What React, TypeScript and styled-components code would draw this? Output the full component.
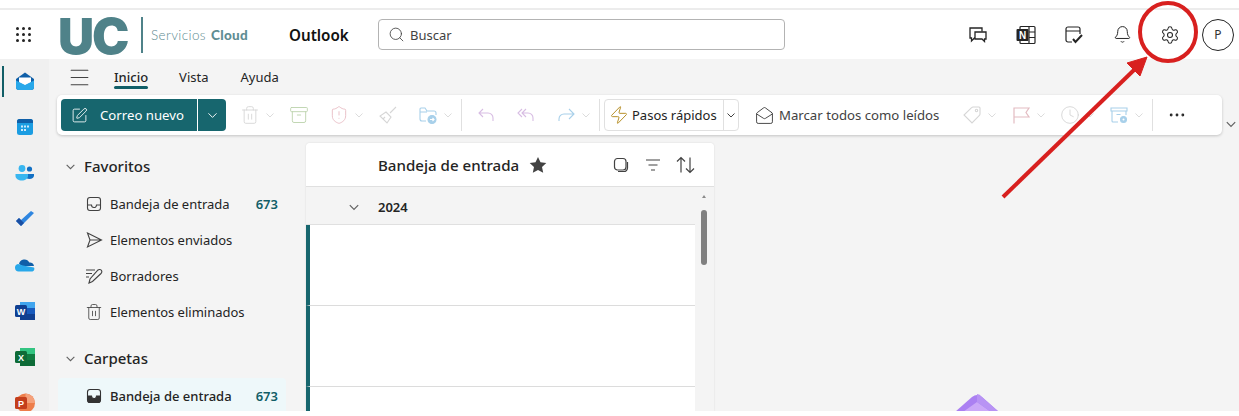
import React from "react";
import styled, { createGlobalStyle } from "styled-components";
import {
  Search, SquarePen, ChevronDown, Trash2, Archive, ShieldAlert, MailOpen, Clock,
  Bell, Settings, Ellipsis, Zap, Menu,
} from "lucide-react";

const Global = createGlobalStyle`
  html, body { margin: 0; padding: 0; background: #fff; }
  body { font-family: "Noto Sans", "Open Sans", sans-serif; color: #242424; }
  * { box-sizing: border-box; }
`;

const Page = styled.div`
  position: relative;
  width: 1239px;
  height: 416px;
  overflow: hidden;
  background: #fff;
  padding-top: 8px;
`;
const TopLine = styled.div`
  height: 2px;
  background: #ececec;
`;
const Header = styled.header`
  height: 49px;
  display: flex;
  align-items: center;
  background: #fff;
  border-top-left-radius: 8px;
  & > * { flex: none; }
`;
const Waffle = styled.div`
  width: 16px;
  height: 16px;
  margin-left: 16px;
  display: grid;
  grid-template-columns: repeat(3, 3px);
  grid-template-rows: repeat(3, 3px);
  gap: 3px;
  & > i { background: #242424; border-radius: 50%; }
`;
const Logo = styled.div`
  display: flex;
  align-items: center;
  margin-left: 26px;
  width: 231px;
`;
const LogoMark = styled.span`
  font-family: "Inter", sans-serif;
  font-weight: 900;
  font-size: 50px;
  line-height: 36px;
  letter-spacing: -2px;
  color: #4f8289;
  width: 83px;
  padding-top: 2px;
`;
const LogoDivider = styled.span`
  width: 2px;
  height: 36px;
  background: #4f8289;
  margin-right: 8px;
`;
const LogoText = styled.span`
  font-family: "Lato", sans-serif;
  font-size: 13.5px;
  font-weight: 300;
  letter-spacing: 0.4px;
  color: #5c8a90;
  white-space: nowrap;
  & > b { font-weight: 900; margin-left: 5px; color: #5f8d93; letter-spacing: 0.3px; }
`;
const AppName = styled.span`
  font-size: 15.2px;
  font-weight: 600;
  color: #111;
  width: 89px;
`;
const SearchBox = styled.div`
  width: 407px;
  height: 31px;
  border: 1px solid #b3b3b3;
  border-radius: 4px;
  display: flex;
  align-items: center;
  padding-left: 9px;
  gap: 5px;
  font-size: 13px;
  color: #424242;
`;
const HeaderIcons = styled.div`
  display: flex;
  align-items: center;
  margin-left: 169px;
`;
const HeaderIcon = styled.div`
  width: 48px;
  display: flex;
  justify-content: center;
  color: #242424;
`;
const Avatar = styled.div`
  width: 32px;
  height: 32px;
  margin-left: 8px;
  border: 1px solid #242424;
  border-radius: 50%;
  display: flex;
  align-items: center;
  justify-content: center;
  font-size: 12px;
  color: #333;
`;
const Main = styled.div`
  height: 352px;
  display: flex;
  overflow: hidden;
  background: #f4f4f4;
`;
const Rail = styled.nav`
  width: 49px;
  flex: none;
  background: #f0f0f0;
  display: flex;
  flex-direction: column;
  align-items: center;
  padding-top: 12px;
  position: relative;
  gap: 26px;
  & > svg { flex: none; }
`;
const RailMark = styled.span`
  position: absolute;
  left: 2px;
  top: 7px;
  width: 2px;
  height: 31px;
  background: #115e67;
`;
const Content = styled.div`
  flex: 1;
  min-width: 0;
  display: flex;
  flex-direction: column;
`;
const TabBar = styled.div`
  height: 36px;
  display: flex;
  align-items: center;
  padding-left: 18px;
  color: #424242;
`;
const Tab = styled.div<{ $active?: boolean; $gap: number }>`
  position: relative;
  margin-left: ${(p) => p.$gap}px;
  font-size: 13px;
  font-weight: ${(p) => (p.$active ? 500 : 400)};
  color: #242424;
  &::after {
    content: "";
    display: ${(p) => (p.$active ? "block" : "none")};
    position: absolute;
    left: 0;
    right: 0;
    bottom: -3px;
    height: 3px;
    border-radius: 2px;
    background: #115e67;
  }
`;
const RibbonRow = styled.div`
  position: relative;
  margin-left: 8px;
`;
const Ribbon = styled.div`
  width: 1165px;
  height: 40px;
  background: #fff;
  border-radius: 5px;
  box-shadow: 0 1px 3px rgba(0, 0, 0, 0.2);
  display: flex;
  align-items: center;
  padding-left: 4px;
`;
const RibbonMore = styled.span`
  position: absolute;
  left: 1168px;
  top: 23px;
  color: #616161;
  display: flex;
`;
const SplitMain = styled.div`
  width: 136px;
  height: 32px;
  flex: none;
  background: #17666e;
  color: #fff;
  border-radius: 4px 0 0 4px;
  display: flex;
  align-items: center;
  padding-left: 10px;
  gap: 12px;
  font-size: 13.2px;
`;
const SplitArrow = styled.div`
  width: 28px;
  height: 32px;
  flex: none;
  margin-left: 1px;
  background: #17666e;
  color: #fff;
  border-radius: 0 4px 4px 0;
  display: flex;
  align-items: center;
  justify-content: center;
`;
const Tool = styled.div<{ $w: number; $ml?: number }>`
  width: ${(p) => p.$w}px;
  margin-left: ${(p) => p.$ml ?? 0}px;
  flex: none;
  display: flex;
  align-items: center;
  gap: 5px;
  color: #d6d6d6;
  & > svg { flex: none; }
`;
const ToolDivider = styled.span`
  width: 1px;
  height: 32px;
  flex: none;
  background: #e0e0e0;
`;
const QuickSteps = styled.div`
  width: 135px;
  height: 32px;
  margin-left: 4px;
  flex: none;
  border: 1px solid #e0e0e0;
  border-radius: 4px;
  display: flex;
  align-items: center;
  padding-left: 4px;
  font-size: 13px;
  color: #242424;
  white-space: nowrap;
`;
const QuickLabel = styled.span`
  margin-left: 3px;
  width: 91px;
`;
const QuickArrow = styled.span`
  flex: 1;
  align-self: stretch;
  border-left: 1px solid #e0e0e0;
  display: flex;
  align-items: center;
  justify-content: center;
  color: #424242;
`;
const MarkAll = styled.div`
  width: 185px;
  margin-left: 16px;
  flex: none;
  display: flex;
  align-items: center;
  gap: 5px;
  font-size: 13.2px;
  white-space: nowrap;
  color: #424242;
`;
const Panes = styled.div`
  flex: 1;
  min-height: 0;
  display: flex;
  margin-top: 8px;
`;
const Sidebar = styled.aside`
  width: 257px;
  flex: none;
  padding-left: 9px;
`;
const SectionTitle = styled.div<{ $mt: number }>`
  height: 32px;
  margin-top: ${(p) => p.$mt}px;
  display: flex;
  align-items: center;
  font-size: 15px;
  font-weight: 500;
  color: #242424;
  padding-left: 7px;
  gap: 8px;
`;
const NavRow = styled.div<{ $active?: boolean }>`
  width: 228px;
  height: 36px;
  margin-top: ${(p) => (p.$active ? 4 : 0)}px;
  display: flex;
  align-items: center;
  padding-left: 26px;
  padding-right: 8px;
  gap: 6px;
  font-size: 13px;
  font-weight: ${(p) => (p.$active ? 500 : 400)};
  color: #242424;
  background: ${(p) => (p.$active ? "#eef8fa" : "transparent")};
  border-radius: 4px;
  white-space: nowrap;
`;
const Count = styled.span`
  margin-left: auto;
  font-weight: 600;
  font-size: 13px;
  color: #115e67;
`;
const NavGroup = styled.div`
  margin-top: 4px;
`;
const MailPane = styled.section`
  width: 408px;
  flex: none;
  display: flex;
  flex-direction: column;
  box-shadow: 0 0 2px rgba(0, 0, 0, 0.12);
  border-radius: 4px 4px 0 0;
  position: relative;
`;
const MailHeader = styled.div`
  height: 44px;
  flex: none;
  display: flex;
  align-items: center;
  background: #fff;
  border-bottom: 1px solid #e0e0e0;
  border-radius: 4px 4px 0 0;
  padding-left: 72px;
  font-size: 15.1px;
  font-weight: 500;
  color: #242424;
`;
const MailTitle = styled.span`
  width: 151px;
`;
const HeaderTools = styled.div`
  margin-left: 64px;
  display: flex;
  gap: 12px;
  color: #424242;
`;
const ToolBox = styled.span`
  width: 20px;
  height: 20px;
  flex: none;
  display: flex;
  align-items: center;
  justify-content: center;
`;
const MailBody = styled.div`
  flex: 1;
  min-height: 0;
  display: flex;
  background: #f4f4f4;
`;
const MailList = styled.div`
  width: 389px;
  flex: none;
  display: flex;
  flex-direction: column;
`;
const YearRow = styled.div`
  height: 38px;
  flex: none;
  display: flex;
  align-items: center;
  padding: 2px 0 0 42px;
  gap: 18px;
  font-size: 13px;
  font-weight: 600;
  color: #242424;
  border-bottom: 1px solid #e0e0e0;
`;
const MailRow = styled.div`
  height: 81px;
  flex: none;
  background: #fff;
  border-left: 4px solid #17666e;
  border-bottom: 1px solid #dcdcdc;
`;
const Scrollbar = styled.div`
  flex: 1;
  position: relative;
`;
const ScrollArrow = styled.span`
  position: absolute;
  left: 7px;
  top: 8px;
  width: 0;
  height: 0;
  border-left: 2px solid transparent;
  border-right: 2px solid transparent;
  border-bottom: 3px solid #8a8a8a;
`;
const ScrollThumb = styled.span`
  position: absolute;
  left: 6px;
  top: 23px;
  width: 6px;
  height: 55px;
  border-radius: 3px;
  background: #808080;
`;
const Reading = styled.div`
  flex: 1;
  display: flex;
  justify-content: center;
  padding-top: 251px;
`;
const Overlay = styled.svg`
  position: absolute;
  left: 0;
  top: 0;
  pointer-events: none;
`;

const Chev = ({ c = "#dcdcdc", s = 10 }: { c?: string; s?: number }) => (
  <svg width={s} height={s} viewBox="0 0 10 10" fill="none">
    <path d="M1.500 3.500 5 7l3.500-3.500" stroke={c} strokeWidth="1" />
  </svg>
);

const S = 1.1;

const OutlookIcon = () => (
  <svg width="20" height="20" viewBox="0 0 20 20">
    <path d="M1 8 10 1.500 19 8v8a3 3 0 0 1-3 3H4a3 3 0 0 1-3-3z" fill="#0f5fa8" />
    <path d="M4 6.500h12v5l-6 3-6-3z" fill="#fff" />
    <path d="M1 9.500 10 14l9-4.500V16a3 3 0 0 1-3 3H4a3 3 0 0 1-3-3z" fill="#28a8ea" />
  </svg>
);
const CalendarIcon = () => (
  <svg width="20" height="20" viewBox="0 0 20 20">
    <rect x="2" y="2" width="16" height="16" rx="2.500" fill="#1b9de2" />
    <path d="M2 6V4.500A2.500 2.500 0 0 1 4.500 2h11A2.500 2.500 0 0 1 18 4.500V6z" fill="#0f5fa8" />
    <g fill="#cfe9fb">
      <rect x="6" y="8.500" width="2" height="2" /><rect x="9" y="8.500" width="2" height="2" /><rect x="12" y="8.500" width="2" height="2" />
      <rect x="6" y="12" width="2" height="2" /><rect x="9" y="12" width="2" height="2" />
    </g>
  </svg>
);
const PeopleIcon = () => (
  <svg width="20" height="20" viewBox="0 0 20 20">
    <circle cx="14.500" cy="6" r="2.600" fill="#1270c4" />
    <path d="M10 11h9v1.500c0 2-2 3.500-4.500 3.500S10 14.500 10 12.500z" fill="#1270c4" />
    <circle cx="7" cy="5.500" r="3.400" fill="#38b6f0" />
    <path d="M0.500 11h12.500v2c0 2.500-2.800 4.500-6.200 4.500S0.500 15.500 0.500 13z" fill="#38b6f0" />
  </svg>
);
const TodoIcon = () => (
  <svg width="20" height="20" viewBox="0 0 20 20">
    <path d="m6 17 13-13-3-2L6 11 4 9l-3 3z" fill="#2f86e0" />
    <path d="m6 17 3-3-5-5-3 3z" fill="#1a4fa3" />
  </svg>
);
const CloudIcon = () => (
  <svg width="21" height="20" viewBox="0 0 21 20">
    <path d="M5 9a5.500 5.500 0 0 1 10.300-1.500A4 4 0 0 1 20 11H8z" fill="#0f5fa8" />
    <path d="M4.500 16.500A3.800 3.800 0 0 1 4 9l5 1.500 11 2a3 3 0 0 1-1.500 4z" fill="#28a8ea" />
  </svg>
);
const OfficeIcon = ({ c1, c2, c3, l }: { c1: string; c2: string; c3: string; l: string }) => (
  <svg width="20" height="20" viewBox="0 0 20 20">
    <rect x="5" y="1" width="15" height="6" fill={c2} />
    <rect x="5" y="7" width="15" height="6" fill={c1} />
    <rect x="5" y="13" width="15" height="6" fill={c3} />
    <rect x="0" y="4" width="12" height="12" rx="1.500" fill={c3} />
    <text x="6" y="13.500" textAnchor="middle" fontSize="9" fontWeight="700" fontFamily="Liberation Sans" fill="#fff">{l}</text>
  </svg>
);
const PptIcon = () => (
  <svg width="20" height="20" viewBox="0 0 20 20">
    <circle cx="10.500" cy="10" r="9.500" fill="#ed7d4a" />
    <path d="M10.500 0.500a9.500 9.500 0 0 1 9.500 9.500h-9.500z" fill="#f4a07a" />
    <rect x="0" y="4" width="12" height="12" rx="1.500" fill="#c43e1c" />
    <text x="6" y="13.500" textAnchor="middle" fontSize="9" fontWeight="700" fontFamily="Liberation Sans" fill="#fff">P</text>
  </svg>
);

const ChatIcon = () => (
  <svg width="20" height="20" viewBox="0 0 20 20" fill="none" stroke="#242424" strokeWidth="1.300">
    <path d="M14 6.500V3H2v10h1.500v3l3-3H7" />
    <path d="M7 7h11v7h-1.500v2.500L14 14H7z" />
  </svg>
);
const NoteIcon = () => (
  <svg width="20" height="20" viewBox="0 0 20 20">
    <rect x="4" y="1.500" width="15" height="17" rx="1" fill="none" stroke="#242424" strokeWidth="1.200" />
    <path d="M13 1.500v17M13 7h6M13 12.500h6" stroke="#242424" strokeWidth="1.200" />
    <rect x="0.500" y="4" width="12" height="12" rx="1" fill="#242424" />
    <text x="6.500" y="13.500" textAnchor="middle" fontSize="10" fontWeight="700" fontFamily="Liberation Sans" fill="#fff">N</text>
  </svg>
);
const TaskIcon = () => (
  <svg width="20" height="20" viewBox="0 0 20 20" fill="none" stroke="#242424" strokeWidth="1.200">
    <path d="M8 17H4a2 2 0 0 1-2-2V4a2 2 0 0 1 2-2h10a2 2 0 0 1 2 2v5M2 6h14" />
    <path d="m9 14 2.500 3L18 10" strokeWidth="2" />
  </svg>
);
const BroomIcon = () => (
  <svg width="20" height="20" viewBox="0 0 20 20" fill="none" stroke="#d6d6d6" strokeWidth="1.100">
    <path d="m12 8 6-6M8 7l5 5-4 6-7-7z" />
    <path d="m5 14 2-2" />
  </svg>
);
const FolderMove = () => (
  <svg width="20" height="20" viewBox="0 0 20 20" fill="none" stroke="#a8d0ea" strokeWidth="1.100">
    <path d="M8 16H4a2 2 0 0 1-2-2V4a1 1 0 0 1 1-1h4l2 3h7a2 2 0 0 1 2 2v2M2 7h7" />
    <circle cx="14" cy="14.500" r="4" fill="#a8d0ea" />
    <path d="M12 14.500h4m-1.500-1.500 1.500 1.500-1.500 1.500" stroke="#fff" />
  </svg>
);
const ReplyIcon = () => (
  <svg width="20" height="20" viewBox="0 0 20 20" fill="none" stroke="#d8bde3" strokeWidth="1.100">
    <path d="M7 4 3 8l4 4M3 8h9a5 5 0 0 1 5 5v3" />
  </svg>
);
const ReplyAllIcon = () => (
  <svg width="20" height="20" viewBox="0 0 20 20" fill="none" stroke="#d8bde3" strokeWidth="1.100">
    <path d="M6 4 2 8l4 4M10 4 6 8l4 4M6 8h6a5 5 0 0 1 5 5v3" />
  </svg>
);
const ForwardIcon = () => (
  <svg width="20" height="20" viewBox="0 0 20 20" fill="none" stroke="#a8d0ea" strokeWidth="1.100">
    <path d="m13 4 5 5-5 5M18 9H8a5 5 0 0 0-5 5v2" />
  </svg>
);
const ArchiveGear = () => (
  <svg width="20" height="20" viewBox="0 0 20 20" fill="none" stroke="#a8d0ea" strokeWidth="1.100">
    <path d="M2 3h16v3H2zM3 6v10a1 1 0 0 0 1 1h5M17 6v4M7.500 9.500h4" />
    <circle cx="14.500" cy="14.500" r="3" fill="#a8d0ea" />
    <circle cx="14.500" cy="14.500" r="1" fill="#fff" stroke="none" />
  </svg>
);
const TagIcon = () => (
  <svg width="20" height="20" viewBox="0 0 20 20" fill="none" stroke="#d6d6d6" strokeWidth="1.100">
    <path d="M11 2h6a1 1 0 0 1 1 1v6a2 2 0 0 1-.6 1.400L10 18 2 10l7.600-7.400A2 2 0 0 1 11 2z" />
    <circle cx="14.500" cy="5.500" r="1.200" />
  </svg>
);
const FlagIcon = () => (
  <svg width="20" height="20" viewBox="0 0 20 20" fill="none" stroke="#e3bcc2" strokeWidth="1.200">
    <path d="M3 18.500V3h15l-3 4.500 3 4.500H3" />
  </svg>
);
const InboxIcon = ({ filled }: { filled?: boolean }) => (
  <svg width="16" height="16" viewBox="0 0 16 16" fill="none" stroke={filled ? "#333" : "#424242"} strokeWidth="1.100">
    <rect x="1.500" y="1.500" width="13" height="13" rx="2.500" />
    {filled ? (
      <path d="M2 8h3.500a2.500 2.500 0 0 0 5 0H14v4.500a2 2 0 0 1-2 2H4a2 2 0 0 1-2-2z" fill="#333" />
    ) : (
      <path d="M1.500 9h4a2.500 2.500 0 0 0 5 0h4" />
    )}
  </svg>
);
const SendIcon = () => (
  <svg width="18" height="18" viewBox="0 0 18 18" fill="none" stroke="#424242" strokeWidth="1.100">
    <path d="m2.500 2 14 7-14 7 2.500-7zM5 9h11.500" />
  </svg>
);
const DraftIcon = () => (
  <svg width="18" height="18" viewBox="0 0 18 18" fill="none" stroke="#424242" strokeWidth="1.100">
    <path d="M1 3h9M1 6.500h6M1 10h3M4 16l1-4 8-9c1-1 3-.5 3.500.5s.5 2-.5 3l-8.500 8z" />
  </svg>
);
const SquaresIcon = () => (
  <svg width="16" height="16" viewBox="0 0 16 16" fill="none" stroke="#424242" strokeWidth="1.200">
    <rect x="1.500" y="1.500" width="11.500" height="11.500" rx="3" />
    <path d="M14.500 5v6a3.500 3.500 0 0 1-3.500 3.500H5" />
  </svg>
);
const FilterIcon = () => (
  <svg width="16" height="16" viewBox="0 0 16 16" fill="none" stroke="#424242" strokeWidth="1.100">
    <path d="M1 3h14M3.500 8h9M6 13h4" />
  </svg>
);
const SortIcon = () => (
  <svg width="19" height="18" viewBox="0 0 19 18" fill="none" stroke="#424242" strokeWidth="1.200">
    <path d="M5 16.500V1.500M1 5.500l4-4 4 4M14 1.500v15M10 12.500l4 4 4-4" />
  </svg>
);
const StarIcon = () => (
  <svg width="18" height="18" viewBox="0 0 18 18">
    <path d="m9 1 2.500 5.300 5.800.7-4.300 4 1.200 5.800L9 14l-5.200 2.800L5 11 .7 7l5.800-.7z" fill="#424242" />
  </svg>
);

const Illustration = () => (
  <svg width="60" height="18" viewBox="0 0 60 18">
    <path d="M8 18 25 3q5-4 10 0l17 15z" fill="#ab80f2" />
    <path d="M16 18 30 8l14 10z" fill="#cba8f8" />
    <path d="M30 0q3 0 5 3l17 15H44L30 8z" fill="#b893f4" />
  </svg>
);

export default function App() {
  return (
    <Page>
      <Global />
      <TopLine />
      <Header>
        <Waffle>{Array.from({ length: 9 }, (_, i) => <i key={i} />)}</Waffle>
        <Logo>
          <LogoMark>UC</LogoMark>
          <LogoDivider />
          <LogoText>Servicios<b>Cloud</b></LogoText>
        </Logo>
        <AppName>Outlook</AppName>
        <SearchBox>
          <Search size={17} strokeWidth={1.2} color="#424242" />
          Buscar
        </SearchBox>
        <HeaderIcons>
          <HeaderIcon><ChatIcon /></HeaderIcon>
          <HeaderIcon><NoteIcon /></HeaderIcon>
          <HeaderIcon><TaskIcon /></HeaderIcon>
          <HeaderIcon><Bell size={19} strokeWidth={1.25} /></HeaderIcon>
          <HeaderIcon><Settings size={20} strokeWidth={1.25} /></HeaderIcon>
          <Avatar>P</Avatar>
        </HeaderIcons>
      </Header>
      <Main>
        <Rail>
          <RailMark />
          <OutlookIcon />
          <CalendarIcon />
          <PeopleIcon />
          <TodoIcon />
          <CloudIcon />
          <OfficeIcon c1="#185abd" c2="#41a5ee" c3="#103f91" l="W" />
          <OfficeIcon c1="#107c41" c2="#33c481" c3="#0e6b37" l="X" />
          <PptIcon />
        </Rail>
        <Content>
          <TabBar>
            <Menu size={25} strokeWidth={1.1} />
            <Tab $active $gap={22}>Inicio</Tab>
            <Tab $gap={31}>Vista</Tab>
            <Tab $gap={32}>Ayuda</Tab>
          </TabBar>
          <RibbonRow>
            <Ribbon>
              <SplitMain>
                <SquarePen size={17} strokeWidth={1.2} />
                Correo nuevo
              </SplitMain>
              <SplitArrow><ChevronDown size={15} strokeWidth={1.5} /></SplitArrow>
              <Tool $w={49} $ml={14}><Trash2 size={20} strokeWidth={S} /><Chev /></Tool>
              <Tool $w={40}><Archive size={20} strokeWidth={S} color="#bcd3ad" /></Tool>
              <Tool $w={49}><ShieldAlert size={20} strokeWidth={S} color="#e8bcc4" /><Chev /></Tool>
              <Tool $w={40}><BroomIcon /></Tool>
              <Tool $w={43}><FolderMove /><Chev /></Tool>
              <ToolDivider />
              <Tool $w={40} $ml={14}><ReplyIcon /></Tool>
              <Tool $w={40}><ReplyAllIcon /></Tool>
              <Tool $w={43}><ForwardIcon /><Chev /></Tool>
              <ToolDivider />
              <QuickSteps>
                <Zap size={20} strokeWidth={1.2} color="#b8912a" />
                <QuickLabel>Pasos rápidos</QuickLabel>
                <QuickArrow><Chev c="#424242" /></QuickArrow>
              </QuickSteps>
              <MarkAll>
                <MailOpen size={19} strokeWidth={1.2} color="#424242" />
                Marcar todos como leídos
              </MarkAll>
              <Tool $w={49} $ml={22}><TagIcon /><Chev /></Tool>
              <Tool $w={49}><FlagIcon /><Chev /></Tool>
              <Tool $w={49}><Clock size={20} strokeWidth={S} /><Chev /></Tool>
              <Tool $w={43}><ArchiveGear /><Chev /></Tool>
              <ToolDivider />
              <Tool $w={20} $ml={14}><Ellipsis size={20} strokeWidth={1.4} color="#242424" /></Tool>
            </Ribbon>
            <RibbonMore><Chev c="#616161" s={12} /></RibbonMore>
          </RibbonRow>
          <Panes>
            <Sidebar>
              <SectionTitle $mt={7}>
                <Chev c="#616161" s={11} />
                Favoritos
              </SectionTitle>
              <NavGroup>
                <NavRow><ToolBox><InboxIcon /></ToolBox>Bandeja de entrada<Count>673</Count></NavRow>
                <NavRow><ToolBox><SendIcon /></ToolBox>Elementos enviados</NavRow>
                <NavRow><ToolBox><DraftIcon /></ToolBox>Borradores</NavRow>
                <NavRow><ToolBox><Trash2 size={18} strokeWidth={1.1} color="#424242" /></ToolBox>Elementos eliminados</NavRow>
              </NavGroup>
              <SectionTitle $mt={12}>
                <Chev c="#616161" s={11} />
                Carpetas
              </SectionTitle>
              <NavRow $active><ToolBox><InboxIcon filled /></ToolBox>Bandeja de entrada<Count>673</Count></NavRow>
            </Sidebar>
            <MailPane>
              <MailHeader>
                <MailTitle>Bandeja de entrada</MailTitle>
                <StarIcon />
                <HeaderTools>
                  <ToolBox><SquaresIcon /></ToolBox>
                  <ToolBox><FilterIcon /></ToolBox>
                  <ToolBox><SortIcon /></ToolBox>
                </HeaderTools>
              </MailHeader>
              <MailBody>
                <MailList>
                  <YearRow>
                    <Chev c="#616161" s={12} />
                    2024
                  </YearRow>
                  <MailRow />
                  <MailRow />
                  <MailRow />
                </MailList>
                <Scrollbar>
                  <ScrollArrow />
                  <ScrollThumb />
                </Scrollbar>
              </MailBody>
            </MailPane>
            <Reading><Illustration /></Reading>
          </Panes>
        </Content>
      </Main>
      <Overlay width="1239" height="416" viewBox="0 0 1239 416">
        <ellipse cx="1168" cy="32" rx="28" ry="29" fill="none" stroke="#d8201f" strokeWidth="4" />
        <path d="M1003 197 1134 70" stroke="#d8201f" strokeWidth="4" fill="none" />
        <path d="M1147 57 1127 63 1140 76z" fill="#d8201f" stroke="#d8201f" strokeWidth="1" />
      </Overlay>
    </Page>
  );
}
